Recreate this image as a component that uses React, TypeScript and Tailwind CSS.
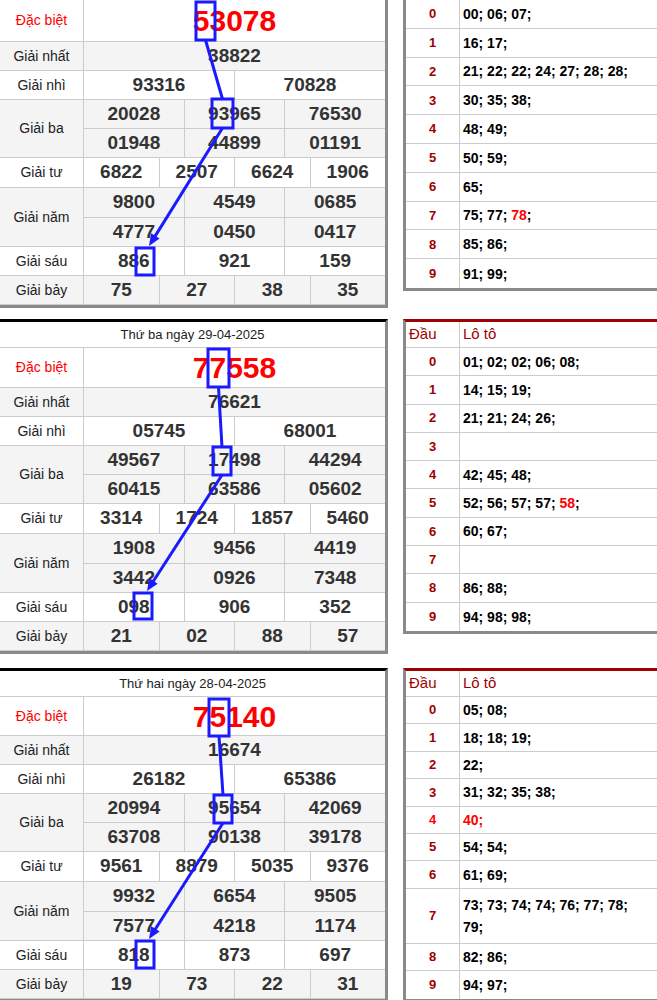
import React from "react";

type Row = { label: string; nums: string[][]; h: number[]; bg?: boolean; red?: boolean };

const mk = (d: { db: string; nhat: string; nhi: string[]; ba: string[][]; tu: string[]; nam: string[][]; sau: string[]; bay: string[] }, dbH: number): Row[] => [
  { label: "Đặc biệt", nums: [[d.db]], h: [dbH], red: true },
  { label: "Giải nhất", nums: [[d.nhat]], h: [28], bg: true },
  { label: "Giải nhì", nums: [d.nhi], h: [28] },
  { label: "Giải ba", nums: d.ba, h: [28, 28], bg: true },
  { label: "Giải tư", nums: [d.tu], h: [29] },
  { label: "Giải năm", nums: d.nam, h: [29, 28], bg: true },
  { label: "Giải sáu", nums: [d.sau], h: [28] },
  { label: "Giải bảy", nums: [d.bay], h: [28], bg: true },
];

function LeftTable({ header, rows, top, lines }: { header?: string; rows: Row[]; top: number; lines: React.ReactNode }) {
  return (
    <div className={`relative w-[388px] border-r-[3px] border-b-[3px] border-[#8a8a8a] ${header ? "border-t-[3px] border-t-black" : ""}`}>
      {header && (
        <div className="h-[26px] flex items-center justify-center text-[13px] text-[#222] border-b border-[#ccc]">{header}</div>
      )}
      {rows.map((r, i) => (
        <div key={i} className={`flex border-b border-[#ccc] last:border-b-0 ${r.bg ? "bg-[#f4f4f4]" : "bg-white"}`}>
          <div className={`w-[84px] shrink-0 flex items-center justify-center text-[14px] border-r border-[#ccc] ${r.red ? "text-[#ff0000]" : "text-[#222]"}`}>{r.label}</div>
          <div className="flex-1 flex flex-col">
            {r.nums.map((line, j) => (
              <div key={j} style={{ height: r.h[j] + (j > 0 ? 1 : 0) }} className={`flex ${j > 0 ? "border-t border-[#ccc]" : ""}`}>
                {line.map((n, k) => (
                  <div key={k} className={`flex-1 flex items-center justify-center font-bold ${k > 0 ? "border-l border-[#ccc]" : ""} ${r.red ? "text-[#ff0000] text-[30px]" : "text-[#333] text-[19px]"}`}>{n}</div>
                ))}
              </div>
            ))}
          </div>
        </div>
      ))}
      <svg className="absolute left-0 pointer-events-none" width="388" height="700" style={{ top: header ? -3 : 0 }}>
        <g transform={`translate(0 ${-top})`}>{lines}</g>
      </svg>
    </div>
  );
}

const B = "#1a1aff";
function Arrows({ a, b, c }: { a: number[]; b: number[]; c: number[] }) {
  const ax = (a[0] + a[2]) / 2, bx = (b[0] + b[2]) / 2;
  const cx = (c[0] + c[2]) / 2 + 4;
  const sx = bx, sy = b[3];
  const ex = cx, ey = c[1] - 2;
  const ang = Math.atan2(ey - sy, ex - sx);
  const L = 12, W = 5;
  const p1 = [ex - L * Math.cos(ang) + W * Math.sin(ang), ey - L * Math.sin(ang) - W * Math.cos(ang)];
  const p2 = [ex - L * Math.cos(ang) - W * Math.sin(ang), ey - L * Math.sin(ang) + W * Math.cos(ang)];
  return (
    <>
      {[a, b, c].map((r, i) => (
        <rect key={i} x={r[0]} y={r[1]} width={r[2] - r[0]} height={r[3] - r[1]} fill="none" stroke={B} strokeWidth="3" />
      ))}
      <line x1={ax} y1={a[3]} x2={bx} y2={b[1]} stroke={B} strokeWidth="3" />
      <line x1={sx} y1={sy} x2={ex - 6 * Math.cos(ang)} y2={ey - 6 * Math.sin(ang)} stroke={B} strokeWidth="3" />
      <polygon points={`${ex},${ey} ${p1[0]},${p1[1]} ${p2[0]},${p2[1]}`} fill={B} />
    </>
  );
}

type RR = { d: string; v: React.ReactNode; h?: number; redD?: boolean };
function RightTable({ header, rows, rh }: { header: boolean; rows: RR[]; rh: number }) {
  return (
    <div className={`w-[254px] border-l-[3px] border-b-[3px] border-[#8a8a8a] ${header ? "border-t-[3px] border-t-[#a00000]" : ""}`}>
      {header && (
        <div className="h-[26px] flex border-b border-[#ccc] text-[15px] text-[#a00000]">
          <div className="w-[54px] px-[3px] flex items-center border-r border-[#ccc]">Đầu</div>
          <div className="flex-1 px-[3px] flex items-center">Lô tô</div>
        </div>
      )}
      {rows.map((r, i) => (
        <div key={i} style={{ height: r.h ?? rh }} className="flex border-b border-[#ccc] last:border-b-0">
          <div className={`w-[54px] flex items-center justify-center border-r border-[#ccc] text-[13px] font-bold ${r.redD ? "text-[#ff0000]" : "text-[#a00000]"}`}>{r.d}</div>
          <div className="flex-1 px-[3px] flex items-center text-[14px] font-bold text-black leading-[22px]"><div className="max-w-[186px]">{r.v}</div></div>
        </div>
      ))}
    </div>
  );
}

const R = ({ t }: { t: string }) => <span className="text-[#ff0000]">{t}</span>;

export default function App() {
  const f = { fontFamily: "Arial, 'Liberation Sans', sans-serif" };
  const s1 = mk({ db: "53078", nhat: "38822", nhi: ["93316", "70828"], ba: [["20028", "93965", "76530"], ["01948", "44899", "01191"]], tu: ["6822", "2507", "6624", "1906"], nam: [["9800", "4549", "0685"], ["4777", "0450", "0417"]], sau: ["886", "921", "159"], bay: ["75", "27", "38", "35"] }, 41);
  const s2 = mk({ db: "77558", nhat: "76621", nhi: ["05745", "68001"], ba: [["49567", "17498", "44294"], ["60415", "63586", "05602"]], tu: ["3314", "1724", "1857", "5460"], nam: [["1908", "9456", "4419"], ["3442", "0926", "7348"]], sau: ["098", "906", "352"], bay: ["21", "02", "88", "57"] }, 39);
  const s3 = mk({ db: "75140", nhat: "16674", nhi: ["26182", "65386"], ba: [["20994", "95654", "42069"], ["63708", "90138", "39178"]], tu: ["9561", "8879", "5035", "9376"], nam: [["9932", "6654", "9505"], ["7577", "4218", "1174"]], sau: ["818", "873", "697"], bay: ["19", "73", "22", "31"] }, 38);
  return (
    <div className="w-[657px] h-[1000px] bg-white overflow-hidden" style={f}>
      <div className="flex gap-[15px] items-start">
        <LeftTable rows={s1} top={0} lines={<Arrows a={[196, 2, 215, 40]} b={[212, 99, 233, 128]} c={[136, 248, 154, 275]} />} />
        <RightTable header={false} rh={28.8} rows={[
          { d: "0", v: "00; 06; 07;" }, { d: "1", v: "16; 17;" }, { d: "2", v: "21; 22; 22; 24; 27; 28; 28;" }, { d: "3", v: "30; 35; 38;" }, { d: "4", v: "48; 49;" },
          { d: "5", v: "50; 59;" }, { d: "6", v: "65;" }, { d: "7", v: <span>75; 77; <R t="78" />;</span> }, { d: "8", v: "85; 86;" }, { d: "9", v: "91; 99;" },
        ]} />
      </div>
      <div className="flex gap-[15px] items-start mt-[11px]">
        <LeftTable header="Thứ ba ngày 29-04-2025" rows={s2} top={319} lines={<Arrows a={[208, 349, 229, 387]} b={[213, 447, 231, 475]} c={[134, 593, 152, 619]} />} />
        <RightTable header rh={28.3} rows={[
          { d: "0", v: "01; 02; 02; 06; 08;" }, { d: "1", v: "14; 15; 19;" }, { d: "2", v: "21; 21; 24; 26;" }, { d: "3", v: "" }, { d: "4", v: "42; 45; 48;" },
          { d: "5", v: <span>52; 56; 57; 57; <R t="58" />;</span> }, { d: "6", v: "60; 67;" }, { d: "7", v: "" }, { d: "8", v: "86; 88;" }, { d: "9", v: "94; 98; 98;" },
        ]} />
      </div>
      <div className="flex gap-[15px] items-start mt-[14px]">
        <LeftTable header="Thứ hai ngày 28-04-2025" rows={s3} top={665} lines={<Arrows a={[209, 696, 229, 733]} b={[214, 792, 232, 820]} c={[136, 938, 154, 965]} />} />
        <RightTable header rh={27.4} rows={[
          { d: "0", v: "05; 08;" }, { d: "1", v: "18; 18; 19;" }, { d: "2", v: "22;" }, { d: "3", v: "31; 32; 35; 38;" }, { d: "4", v: <R t="40;" />, redD: true },
          { d: "5", v: "54; 54;" }, { d: "6", v: "61; 69;" }, { d: "7", v: "73; 73; 74; 74; 76; 77; 78; 79;", h: 55 }, { d: "8", v: "82; 86;" }, { d: "9", v: "94; 97;" },
        ]} />
      </div>
    </div>
  );
}
